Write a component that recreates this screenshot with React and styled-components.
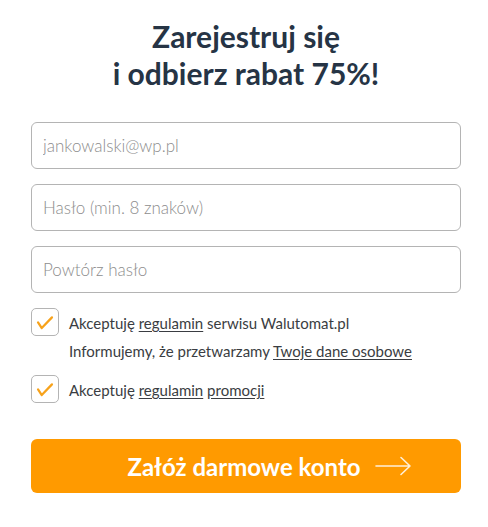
import React from 'react';
import styled, { createGlobalStyle } from 'styled-components';

// --------------------------------------
// Global
// --------------------------------------
const GlobalStyle = createGlobalStyle`
  html, body {
    margin: 0;
    padding: 0;
    background: #fff;
    font-family: Lato, "Open Sans", sans-serif;
  }
`;

// --------------------------------------
// Icons
// --------------------------------------
const CheckIcon = () => (
  <svg width="28" height="28" viewBox="0 0 28 28" fill="none">
    <path d="M6.5 14.5 L10.5 20.5 L21.5 9" stroke="#f7a21b" strokeWidth="2.4" strokeLinecap="round" strokeLinejoin="round" />
  </svg>
);

const ArrowIcon = () => (
  <svg width="37" height="20" viewBox="0 0 37 20" fill="none">
    <path d="M1 10 H35 M26 1.5 L35 10 L26 18.5" stroke="rgba(255,255,255,0.85)" strokeWidth="1.6" strokeLinecap="round" strokeLinejoin="round" />
  </svg>
);

// --------------------------------------
// Component
// --------------------------------------
const App = () => {
  return (
    <>
      <GlobalStyle />
      <Page>
        <Title>
          Zarejestruj się
          <br />
          i odbierz rabat 75%!
        </Title>

        <Fields>
          <Input type="email" placeholder="jankowalski@wp.pl" />
          <Input type="password" placeholder="Hasło (min. 8 znaków)" />
          <Input type="password" placeholder="Powtórz hasło" />
        </Fields>

        <Consents>
          <ConsentRow>
            <Box><CheckIcon /></Box>
            <ConsentText>
              <Line>Akceptuję <A href="#">regulamin</A> serwisu Walutomat.pl</Line>
              <Line>Informujemy, że przetwarzamy <A href="#">Twoje dane osobowe</A></Line>
            </ConsentText>
          </ConsentRow>
          <ConsentRow>
            <Box><CheckIcon /></Box>
            <ConsentText>
              <Line>Akceptuję <A href="#">regulamin</A> <A href="#">promocji</A></Line>
            </ConsentText>
          </ConsentRow>
        </Consents>

        <Submit type="button">
          Załóż darmowe konto
          <ArrowIcon />
        </Submit>
      </Page>
    </>
  );
};

// --------------------------------------
// Styles
// --------------------------------------
const Page = styled.div`
  width: 430px;
  padding: 18px 27px 0 31px;
  display: flex;
  flex-direction: column;
`;

const Title = styled.h1`
  margin: 0;
  text-align: center;
  font-family: Lato, sans-serif;
  font-weight: 700;
  font-size: 30px;
  line-height: 37px;
  color: #263445;
`;

const Fields = styled.div`
  margin-top: 30px;
  display: flex;
  flex-direction: column;
  gap: 15px;
`;

const Input = styled.input`
  box-sizing: border-box;
  width: 100%;
  height: 47px;
  padding: 0 11px;
  border: 1px solid #b4b4b4;
  border-radius: 6px;
  font-family: Lato, sans-serif;
  font-weight: 300;
  font-size: 17px;
  color: #333;
  outline: none;

  &::placeholder {
    color: #8d8d8d;
  }
`;

const Consents = styled.div`
  margin-top: 15px;
  display: flex;
  flex-direction: column;
  gap: 10px;
`;

const ConsentRow = styled.div`
  display: flex;
  align-items: flex-start;
  gap: 10px;
`;

const Box = styled.span`
  box-sizing: border-box;
  flex: none;
  width: 28px;
  height: 28px;
  border: 1px solid #b4b4b4;
  border-radius: 5px;
  display: flex;
  align-items: center;
  justify-content: center;
`;

const ConsentText = styled.div`
  display: flex;
  flex-direction: column;
  padding-top: 1px;
`;

const Line = styled.p`
  margin: 0;
  font-size: 15px;
  line-height: 28px;
  color: #3a3d42;
`;

const A = styled.a`
  color: #3a3d42;
  text-decoration: underline;
  text-underline-offset: 2px;
`;

const Submit = styled.button`
  margin-top: 35px;
  height: 54px;
  width: 100%;
  border: none;
  border-radius: 6px;
  background: #ff9a00;
  color: #fff;
  font-family: Lato, sans-serif;
  font-weight: 700;
  font-size: 24px;
  display: flex;
  align-items: center;
  justify-content: center;
  gap: 14px;
  padding: 0 0 0 47px;
  cursor: pointer;
`;

export default App;
